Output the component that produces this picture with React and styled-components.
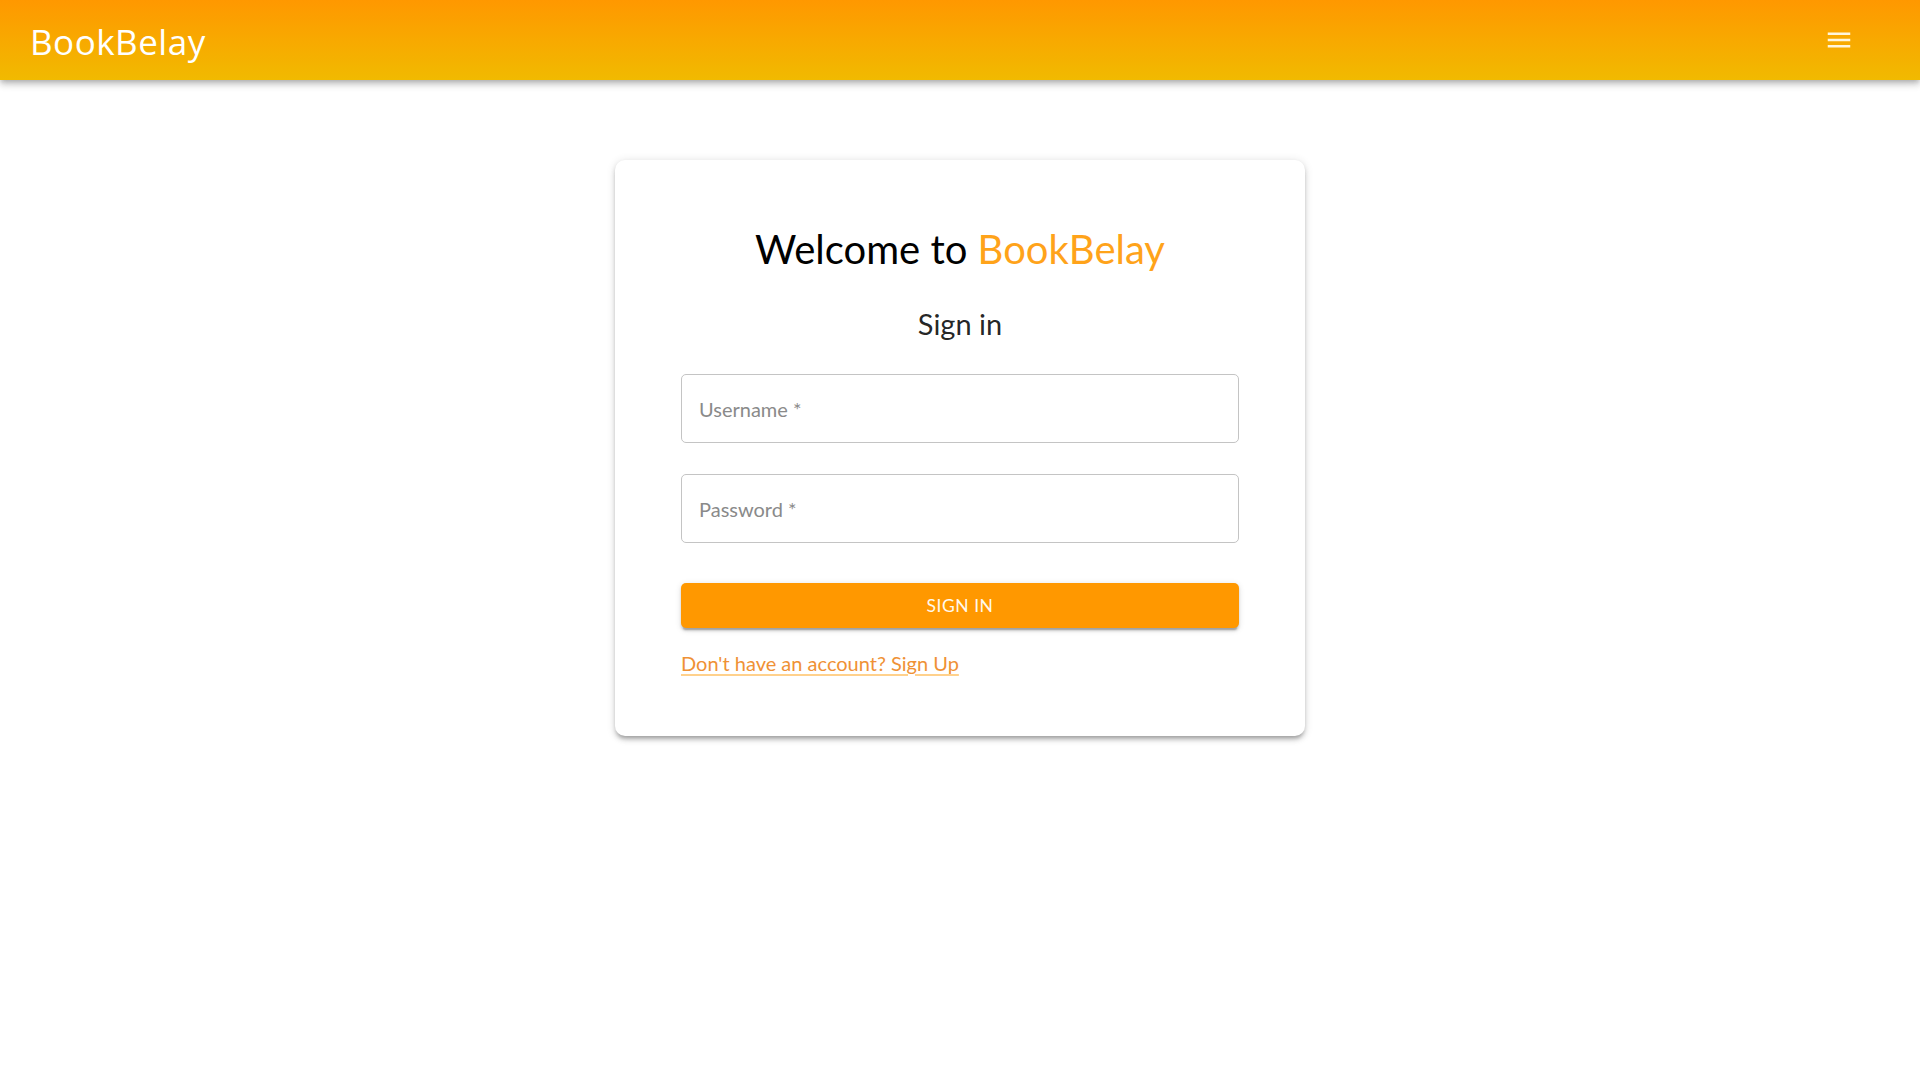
import React from "react";
import styled, { createGlobalStyle } from "styled-components";

const Global = createGlobalStyle`
  html, body { margin: 0; padding: 0; background: #ffffff; }
  body { font-family: "Lato", "Open Sans", sans-serif; color: rgba(0,0,0,0.87); }
  * { box-sizing: border-box; }
`;

const Page = styled.div`
  min-height: 100vh;
  display: flex;
  flex-direction: column;
`;

const AppBar = styled.header`
  height: 80px;
  display: flex;
  align-items: center;
  justify-content: space-between;
  padding: 0 66px 0 30px;
  background: linear-gradient(to bottom, #ff9800 0%, #f1ba00 100%);
  box-shadow: 0 2.5px 5px -1.25px rgba(0,0,0,0.2), 0 5px 6px 0 rgba(0,0,0,0.14), 0 1.25px 12px 0 rgba(0,0,0,0.12);
  position: relative;
  z-index: 2;
`;

const Brand = styled.div`
  font-family: "Open Sans", "Noto Sans", sans-serif;
  font-size: 35px;
  color: #ffffff;
  letter-spacing: 0.5px;
  line-height: 1;
  padding-top: 2px;
`;

const MenuButton = styled.button`
  background: none;
  border: 0;
  padding: 0;
  width: 30px;
  height: 30px;
  display: flex;
  align-items: center;
  justify-content: center;
  color: #fff6dc;
  cursor: pointer;
`;

const Main = styled.main`
  display: flex;
  justify-content: center;
  padding-top: 80px;
`;

const Card = styled.section`
  width: 690px;
  background: #ffffff;
  border-radius: 10px;
  padding: 63px 66px 58px;
  box-shadow: 0 3.75px 3.75px -2.5px rgba(0,0,0,0.2), 0 3.75px 5px 0 rgba(0,0,0,0.14), 0 1.25px 10px 0 rgba(0,0,0,0.12);
  display: flex;
  flex-direction: column;
`;

const Title = styled.h1`
  margin: 0;
  text-align: center;
  font-weight: 400;
  font-size: 40px;
  line-height: 52px;
  color: #000000;
`;

const Accent = styled.span`
  color: #ffa31a;
`;

const Subtitle = styled.h2`
  margin: 29px 0 0;
  text-align: center;
  font-weight: 400;
  font-size: 29px;
  line-height: 40px;
  color: rgba(0,0,0,0.87);
`;

const Form = styled.form`
  display: flex;
  flex-direction: column;
  margin-top: 30px;
`;

const Field = styled.div`
  height: 69px;
  border: 1px solid #c4c4c4;
  border-radius: 5px;
  display: flex;
  align-items: center;
  padding: 0 17px;
  margin-top: ${(p) => (p.$first ? "0" : "31px")};
`;

const Input = styled.input`
  border: 0;
  outline: none;
  width: 100%;
  font-family: inherit;
  font-size: 20px;
  color: rgba(0,0,0,0.87);
  background: transparent;
  padding: 0;
  &::placeholder { color: #8a8a8a; opacity: 1; }
`;

const SubmitButton = styled.button`
  margin-top: 40px;
  height: 45px;
  border: 0;
  border-radius: 5px;
  background: #ff9800;
  color: #fff8ec;
  font-family: inherit;
  font-size: 17.5px;
  letter-spacing: 0.5px;
  text-transform: uppercase;
  box-shadow: 0 3.75px 1.25px -2.5px rgba(0,0,0,0.2), 0 2.5px 2.5px 0 rgba(0,0,0,0.14), 0 1.25px 6px 0 rgba(0,0,0,0.12);
  cursor: pointer;
`;

const LinkRow = styled.div`
  margin-top: 20px;
  display: flex;
`;

const SignUpLink = styled.a`
  font-size: 20px;
  line-height: 1.5;
  color: #ef9135;
  text-decoration: underline;
  text-decoration-color: rgba(255,152,0,0.45);
  text-underline-offset: 3px;
  cursor: pointer;
`;

function MenuIcon() {
  return (
    <svg width="30" height="30" viewBox="0 0 24 24" fill="currentColor" aria-hidden="true">
      <path d="M3 18h18v-2H3zm0-5h18v-2H3zm0-7v2h18V6z" />
    </svg>
  );
}

export default function App() {
  return (
    <Page>
      <Global />
      <AppBar>
        <Brand>BookBelay</Brand>
        <MenuButton aria-label="menu">
          <MenuIcon />
        </MenuButton>
      </AppBar>
      <Main>
        <Card>
          <Title>
            Welcome to <Accent>BookBelay</Accent>
          </Title>
          <Subtitle>Sign in</Subtitle>
          <Form onSubmit={(e) => e.preventDefault()}>
            <Field $first>
              <Input placeholder="Username *" />
            </Field>
            <Field>
              <Input type="password" placeholder="Password *" />
            </Field>
            <SubmitButton type="submit">Sign In</SubmitButton>
          </Form>
          <LinkRow>
            <SignUpLink>Don't have an account? Sign Up</SignUpLink>
          </LinkRow>
        </Card>
      </Main>
    </Page>
  );
}
